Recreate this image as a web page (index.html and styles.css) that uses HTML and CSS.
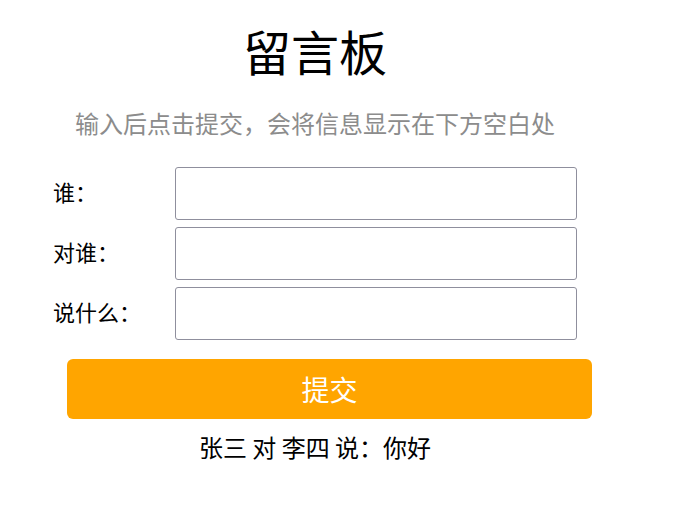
FILE: index.html
```html
<!DOCTYPE html>
<html lang="zh">
<head>
  <meta charset="UTF-8" />
  <title>留言板</title>
  <link rel="stylesheet" href="styles.css">
</head>
<body>
  <div class="board">
    <h1 class="title">留言板</h1>
    <p class="tip">输入后点击提交，会将信息显示在下方空白处</p>
    <div class="form_row">
      <label for="who">谁：</label>
      <input id="who" type="text" />
    </div>
    <div class="form_row">
      <label for="to">对谁：</label>
      <input id="to" type="text" />
    </div>
    <div class="form_row">
      <label for="msg">说什么：</label>
      <input id="msg" type="text" />
    </div>
    <button class="submit_button">提交</button>
    <div class="messages">
      <p>张三 对 李四 说：你好</p>
    </div>
  </div>
</body>
</html>
```

FILE: styles.css
```css
body {
  margin: 0;
  font-family: "Noto Sans CJK SC", "Noto Sans", sans-serif;
  background-color: #fff;
  color: #000;
}

.board {
  width: 524px;
  margin-left: 53px;
  padding-top: 20px;
}

.title {
  margin: 0;
  font-size: 48px;
  font-weight: 400;
  line-height: 60px;
  text-align: center;
}

.tip {
  margin: 27px 0 28px;
  font-size: 24px;
  line-height: 32px;
  color: #8c8c8c;
  text-align: center;
}

.form_row {
  display: flex;
  align-items: center;
  margin-bottom: 7px;
}

.form_row label {
  width: 122px;
  padding-bottom: 6px;
  font-size: 22px;
}

.form_row input {
  flex: 1;
  height: 53px;
  box-sizing: border-box;
  border: 1px solid #8f8f9d;
  border-radius: 3px;
}

.submit_button {
  display: block;
  width: 525px;
  height: 60px;
  margin: 19px 0 0 14px;
  background-color: #ffa500;
  color: #fff;
  border: none;
  border-radius: 6px;
  font-family: inherit;
  font-size: 28px;
}

.messages p {
  margin: 12px 0 0;
  font-size: 24px;
  line-height: 32px;
  text-align: center;
}
```
